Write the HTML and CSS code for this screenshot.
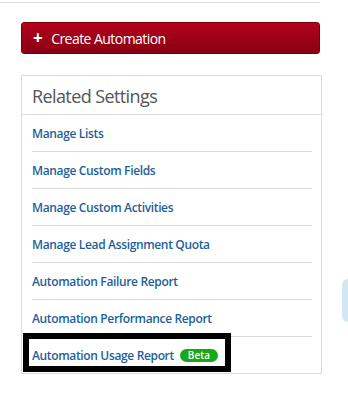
FILE: index.html
```html
<!DOCTYPE html>
<html>
<head>
<meta charset="utf-8">
<link rel="stylesheet" href="styles.css">
</head>
<body>
<div class="topline"></div>
<div class="side">
  <button class="create-btn"><span class="plus">+</span>Create Automation</button>
  <div class="panel">
    <div class="panel-head">Related Settings</div>
    <ul class="links">
      <li><a href="#">Manage Lists</a></li>
      <li><a href="#">Manage Custom Fields</a></li>
      <li><a href="#">Manage Custom Activities</a></li>
      <li><a href="#">Manage Lead Assignment Quota</a></li>
      <li><a href="#">Automation Failure Report</a></li>
      <li><a href="#">Automation Performance Report</a></li>
      <li class="last"><a href="#">Automation Usage Report</a><span class="beta">Beta</span><span class="highlight"></span></li>
    </ul>
  </div>
</div>
<div class="float-tab"></div>
</body>
</html>
```
FILE: styles.css
```css
html, body {
  margin: 0;
  padding: 0;
  background: #fff;
  font-family: "Open Sans", "Noto Sans", sans-serif;
}
body {
  position: relative;
  width: 348px;
  height: 410px;
  overflow: hidden;
}
.topline {
  height: 2px;
  width: 320px;
  border-bottom: 1px solid #dcdcdc;
}
.side {
  width: 301px;
  padding-left: 21px;
}
.create-btn {
  display: flex;
  align-items: center;
  width: 299px;
  height: 32px;
  margin-top: 19px;
  padding: 0 0 0 11px;
  border: 1px solid #7a000e;
  border-radius: 3px;
  background: linear-gradient(#b3031f, #8a0012);
  color: #fff;
  font-family: inherit;
  font-size: 14px;
  letter-spacing: -0.55px;
  cursor: pointer;
}
.plus {
  font-size: 17px;
  font-weight: 700;
  margin-right: 9px;
  line-height: 1;
  position: relative;
  top: -1px;
}
.panel {
  margin-top: 21px;
  border: 1px solid #dcdcdc;
  width: 299px;
}
.panel-head {
  height: 38px;
  border-bottom: 1px solid #dcdcdc;
  padding-left: 10px;
  font-size: 18px;
  letter-spacing: -0.6px;
  color: #555;
  line-height: 40px;
}
.links {
  list-style: none;
  margin: 0;
  padding: 0 9px 0 10px;
}
.links li {
  height: 36px;
  border-bottom: 1px solid #dcdcdc;
  display: flex;
  align-items: center;
}
.links li.last {
  border-bottom: none;
  position: relative;
}
.links a {
  color: #1b5f9b;
  font-size: 12px;
  font-weight: 600;
  letter-spacing: -0.35px;
  text-decoration: none;
}
.beta {
  margin-left: 6px;
  background: #16a816;
  color: #fff;
  font-size: 10px;
  font-weight: 600;
  border-radius: 7px;
  height: 13px;
  line-height: 13px;
  padding: 0 8px;
}
.highlight {
  position: absolute;
  left: -9px;
  top: -4px;
  width: 196px;
  height: 27px;
  border: 6px solid #000;
}
.float-tab {
  position: absolute;
  left: 342px;
  top: 279px;
  width: 16px;
  height: 43px;
  border-radius: 6px;
  background: #d2e7f2;
}
```
